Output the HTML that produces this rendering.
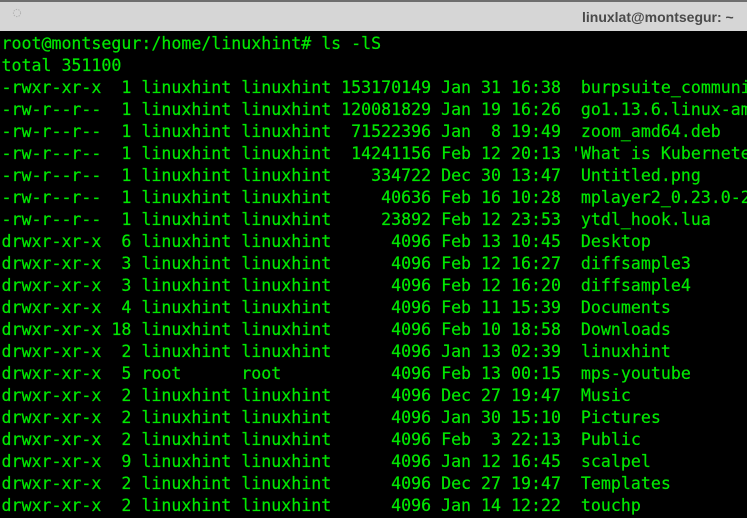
<!DOCTYPE html>
<html>
<head>
<meta charset="utf-8">
<style>
html,body{margin:0;padding:0;background:#000;}
#wrap{position:relative;width:747px;height:518px;overflow:hidden;background:#000;}
#top{position:absolute;left:0;top:0;width:747px;height:2px;background:#6e6e6e;}
#bar{position:absolute;left:0;top:2px;width:747px;height:29px;background:#d6d6d6;}
#title{position:absolute;left:582px;top:7px;font:bold 14px/20px "Liberation Sans",sans-serif;color:#4a4a4a;white-space:pre;}
#term{position:absolute;left:1.5px;top:33px;margin:0;font:16.6px/22px "DejaVu Sans Mono",monospace;color:#00e800;white-space:pre;-webkit-text-stroke:.2px #00e800;}
svg{position:absolute;left:12px;top:8px;}
</style>
</head>
<body>
<div id="wrap">
<div id="top"></div>
<div id="bar"></div>
<svg width="10" height="10" viewBox="0 0 10 10"><circle cx="5" cy="5" r="3.6" fill="none" stroke="#b0b0b0" stroke-width="1" stroke-dasharray="1.4 1.2"/></svg>
<div id="title">linuxlat@montsegur: ~</div>
<pre id="term">root@montsegur:/home/linuxhint# ls -lS
total 351100
-rwxr-xr-x  1 linuxhint linuxhint 153170149 Jan 31 16:38  burpsuite_community_linux
-rw-r--r--  1 linuxhint linuxhint 120081829 Jan 19 16:26  go1.13.6.linux-amd64.tar.gz
-rw-r--r--  1 linuxhint linuxhint  71522396 Jan  8 19:49  zoom_amd64.deb
-rw-r--r--  1 linuxhint linuxhint  14241156 Feb 12 20:13 'What is Kubernetes.mp4'
-rw-r--r--  1 linuxhint linuxhint    334722 Dec 30 13:47  Untitled.png
-rw-r--r--  1 linuxhint linuxhint     40636 Feb 16 10:28  mplayer2_0.23.0-2.deb
-rw-r--r--  1 linuxhint linuxhint     23892 Feb 12 23:53  ytdl_hook.lua
drwxr-xr-x  6 linuxhint linuxhint      4096 Feb 13 10:45  Desktop
drwxr-xr-x  3 linuxhint linuxhint      4096 Feb 12 16:27  diffsample3
drwxr-xr-x  3 linuxhint linuxhint      4096 Feb 12 16:20  diffsample4
drwxr-xr-x  4 linuxhint linuxhint      4096 Feb 11 15:39  Documents
drwxr-xr-x 18 linuxhint linuxhint      4096 Feb 10 18:58  Downloads
drwxr-xr-x  2 linuxhint linuxhint      4096 Jan 13 02:39  linuxhint
drwxr-xr-x  5 root      root           4096 Feb 13 00:15  mps-youtube
drwxr-xr-x  2 linuxhint linuxhint      4096 Dec 27 19:47  Music
drwxr-xr-x  2 linuxhint linuxhint      4096 Jan 30 15:10  Pictures
drwxr-xr-x  2 linuxhint linuxhint      4096 Feb  3 22:13  Public
drwxr-xr-x  9 linuxhint linuxhint      4096 Jan 12 16:45  scalpel
drwxr-xr-x  2 linuxhint linuxhint      4096 Dec 27 19:47  Templates
drwxr-xr-x  2 linuxhint linuxhint      4096 Jan 14 12:22  touchp</pre>
</div>
</body>
</html>
